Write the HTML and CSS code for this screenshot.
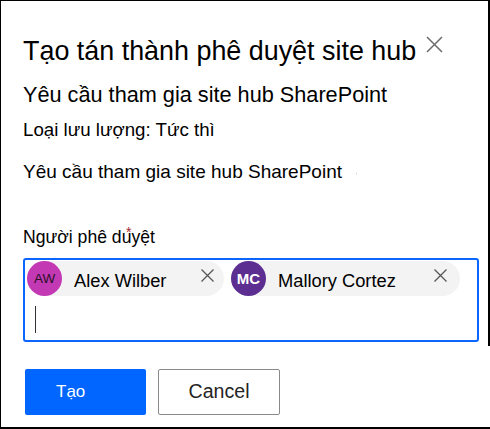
FILE: index.html
```html
<!DOCTYPE html>
<html lang="vi">
<head>
<meta charset="utf-8">
<title>Tạo tán thành phê duyệt site hub</title>
<link rel="stylesheet" href="styles.css">
</head>
<body>
<div class="frame">
  <div class="title-row">
    <h1 class="title">Tạo tán thành phê duyệt site hub</h1>
    <button class="close" aria-label="Close">
      <svg width="17" height="17" viewBox="0 0 17 17"><path d="M1 1 L16 16 M16 1 L1 16" stroke="#6b6b6b" stroke-width="1.5" fill="none"/></svg>
    </button>
  </div>
  <div class="subtitle">Yêu cầu tham gia site hub SharePoint</div>
  <div class="flow">Loại lưu lượng: Tức thì</div>
  <div class="desc">Yêu cầu tham gia site hub SharePoint<span class="dot"></span></div>
  <label class="label">Người phê duyệt<span class="req">*</span></label>
  <div class="picker">
    <div class="chips">
      <div class="chip chip-aw">
        <span class="avatar av-aw">AW</span>
        <span class="name">Alex Wilber</span>
        <svg class="x" width="13" height="13" viewBox="0 0 13 13"><path d="M0.5 0.5 L12.5 12.5 M12.5 0.5 L0.5 12.5" stroke="#555" stroke-width="1.3" fill="none"/></svg>
      </div>
      <div class="chip chip-mc">
        <span class="avatar av-mc">MC</span>
        <span class="name">Mallory Cortez</span>
        <svg class="x" width="13" height="13" viewBox="0 0 13 13"><path d="M0.5 0.5 L12.5 12.5 M12.5 0.5 L0.5 12.5" stroke="#555" stroke-width="1.3" fill="none"/></svg>
      </div>
    </div>
    <div class="caret"></div>
  </div>
  <div class="actions">
    <button class="btn btn-primary">Tạo</button>
    <button class="btn btn-default">Cancel</button>
  </div>
</div>
</body>
</html>
```

FILE: styles.css
```css
* { box-sizing: border-box; }
html, body { margin: 0; padding: 0; background: #fff; }
body { width: 490px; height: 429px; overflow: hidden; font-family: "Liberation Sans", Arial, sans-serif; color: #000; }

.frame {
  width: 490px;
  height: 429px;
  border-top: 1px solid #000;
  border-left: 1px solid #000;
  border-bottom: 2px solid #000;
  background: linear-gradient(#000, #000) right top / 2px 345px no-repeat, #fff;
  padding: 34px 0 0 22px;
}

.title-row { display: flex; align-items: flex-start; height: 32px; }
.title { margin: 0; font-size: 26.9px; font-weight: normal; line-height: 32px; white-space: nowrap; }
.close { border: 0; background: none; padding: 0; margin: 1px 0 0 10px; width: 17px; height: 17px; display: block; }
.close svg { display: block; }

.subtitle { margin-top: 15px; font-size: 21.7px; line-height: 26px; white-space: nowrap; }
.flow { margin-top: 9.5px; font-size: 18.7px; line-height: 24px; white-space: nowrap; }
.desc { margin-top: 18px; font-size: 19px; line-height: 24px; white-space: nowrap; }
.dot { display: inline-block; width: 1px; height: 3px; background: #e4e4e4; margin-left: 14px; vertical-align: 3px; }

.label { display: block; position: relative; margin-top: 42px; font-size: 17.6px; line-height: 22px; white-space: nowrap; width: max-content; }
.req { position: absolute; left: 103px; top: -1px; color: #a4262c; font-size: 14px; line-height: 14px; }

.picker {
  margin-top: 10px;
  width: 456px;
  height: 84px;
  border: 2px solid #0a66ff;
  border-radius: 3px;
  padding: 1px 2px 0 2px;
}
.chips { display: flex; gap: 7px; }
.chip {
  display: flex; align-items: center;
  height: 35px; border-radius: 18px; background: #f3f3f3;
  font-size: 18.3px; color: #000;
}
.chip-aw { width: 197px; }
.chip-mc { width: 229px; }
.avatar {
  width: 35px; height: 35px; border-radius: 50%;
  display: flex; align-items: center; justify-content: center;
  flex: none;
}
.av-aw { background: #c239b3; color: #2b1028; font-size: 13.5px; }
.av-mc { background: #5c2e91; color: #fff; font-size: 15px; font-weight: bold; }
.name { margin-left: 12px; flex: 1; white-space: nowrap; padding-top: 5px; }
.x { flex: none; margin-right: 10px; margin-top: -6px; }
.chip-mc .x { margin-right: 13px; }

.caret { width: 1px; height: 27px; background: #333; margin: 10px 0 0 8px; }

.actions { display: flex; gap: 12px; margin: 27px 0 0 2px; }
.btn {
  height: 46px; width: 121px; border-radius: 2px;
  font-family: "Liberation Sans", Arial, sans-serif; padding: 0;
}
.btn-primary { background: #0066ff; border: 0; color: #fff; font-size: 17px; text-align: left; padding-left: 31px; }
.btn-default { width: 122px; background: #fff; border: 1px solid #8a8a8a; color: #242424; font-size: 19.6px; }
```
